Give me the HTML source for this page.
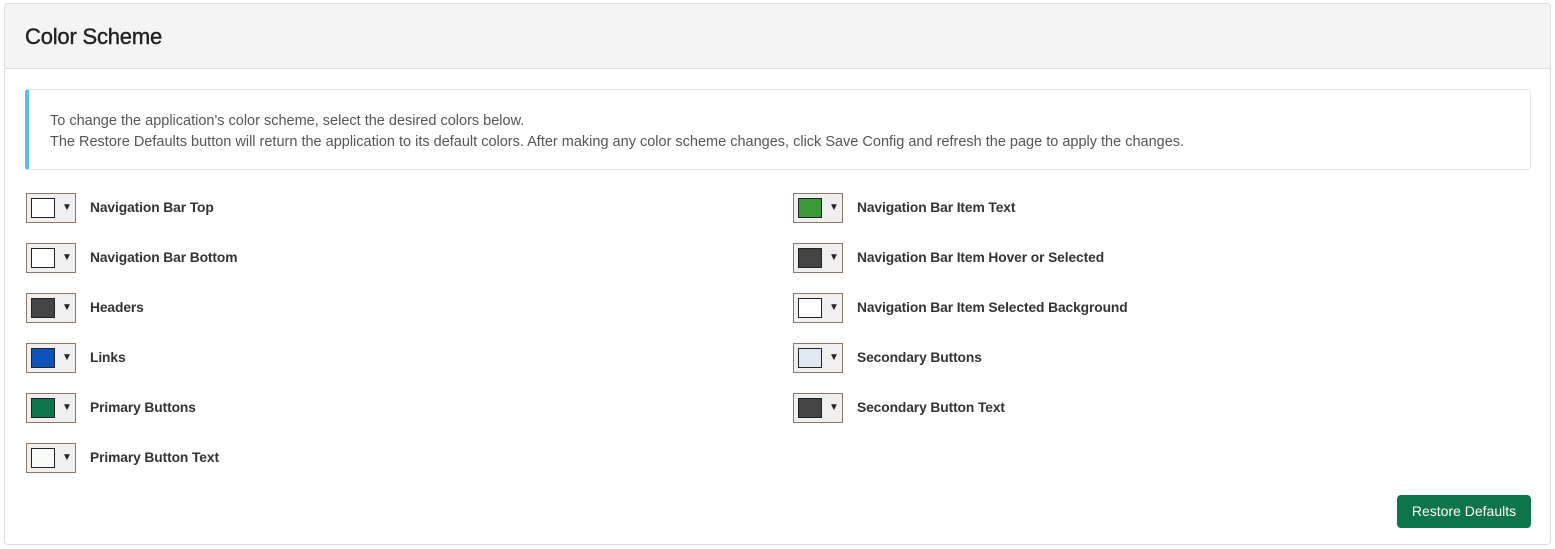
<!DOCTYPE html>
<html><head><style>
body{margin:0;background:#fff;font-family:"Liberation Sans",sans-serif;color:#333;}
.card{position:absolute;left:4px;top:3px;width:1545px;height:540px;border:1px solid #ddd;border-radius:4px;overflow:hidden}
.hd{height:64px;background:#f4f4f4;border-bottom:1px solid #ddd;}
.hd h1{margin:0;position:absolute;left:20px;top:20px;font-size:22px;font-weight:normal;color:#222;letter-spacing:-0.2px;-webkit-text-stroke:0.4px #222}
.alert{position:absolute;left:20px;top:85px;width:1501px;height:79px;border:1px solid #e6e6e6;border-left:4px solid #5bc0de;border-radius:3px;font-size:14.5px;color:#555;line-height:21px;padding:0}
.alert div{position:absolute;left:21px;top:21px;white-space:nowrap}
.row{position:absolute;height:30px}
.sw{position:absolute;left:0;top:0;width:48px;height:28px;border:1px solid #8b7765;background:#efefef}
.sw i{position:absolute;left:4px;top:4px;width:22px;height:18px;border:1px solid #222}
.sw b{position:absolute;left:35px;top:8px;font-size:10px;color:#222}
.lb{position:absolute;left:64px;top:7px;font-size:13.8px;font-weight:bold;white-space:nowrap;color:#333;letter-spacing:-0.1px}
.btn{position:absolute;left:1392px;top:491px;width:134px;height:33px;background:#0e744a;border-radius:4px;color:#fff;font-size:14px;line-height:33px;text-align:center}
</style></head><body>
<div class="card">
<div class="hd"><h1>Color Scheme</h1></div>
<div class="alert"><div>To change the application's color scheme, select the desired colors below.<br>The Restore Defaults button will return the application to its default colors. After making any color scheme changes, click Save Config and refresh the page to apply the changes.</div></div>
<div class="row" style="left:21px;top:189px"><div class="sw"><i style="background:#fff"></i><b>▼</b></div><span class="lb">Navigation Bar Top</span></div>
<div class="row" style="left:21px;top:239px"><div class="sw"><i style="background:#fff"></i><b>▼</b></div><span class="lb">Navigation Bar Bottom</span></div>
<div class="row" style="left:21px;top:289px"><div class="sw"><i style="background:#444"></i><b>▼</b></div><span class="lb">Headers</span></div>
<div class="row" style="left:21px;top:339px"><div class="sw"><i style="background:#0d52b8"></i><b>▼</b></div><span class="lb">Links</span></div>
<div class="row" style="left:21px;top:389px"><div class="sw"><i style="background:#0e744a"></i><b>▼</b></div><span class="lb">Primary Buttons</span></div>
<div class="row" style="left:21px;top:439px"><div class="sw"><i style="background:#f6fbf8"></i><b>▼</b></div><span class="lb">Primary Button Text</span></div>
<div class="row" style="left:788px;top:189px"><div class="sw"><i style="background:#3a9a3a"></i><b>▼</b></div><span class="lb">Navigation Bar Item Text</span></div>
<div class="row" style="left:788px;top:239px"><div class="sw"><i style="background:#444"></i><b>▼</b></div><span class="lb">Navigation Bar Item Hover or Selected</span></div>
<div class="row" style="left:788px;top:289px"><div class="sw"><i style="background:#fff"></i><b>▼</b></div><span class="lb">Navigation Bar Item Selected Background</span></div>
<div class="row" style="left:788px;top:339px"><div class="sw"><i style="background:#dfe8f3"></i><b>▼</b></div><span class="lb">Secondary Buttons</span></div>
<div class="row" style="left:788px;top:389px"><div class="sw"><i style="background:#444"></i><b>▼</b></div><span class="lb">Secondary Button Text</span></div>
<div class="btn">Restore Defaults</div>
</div>
</body></html>
